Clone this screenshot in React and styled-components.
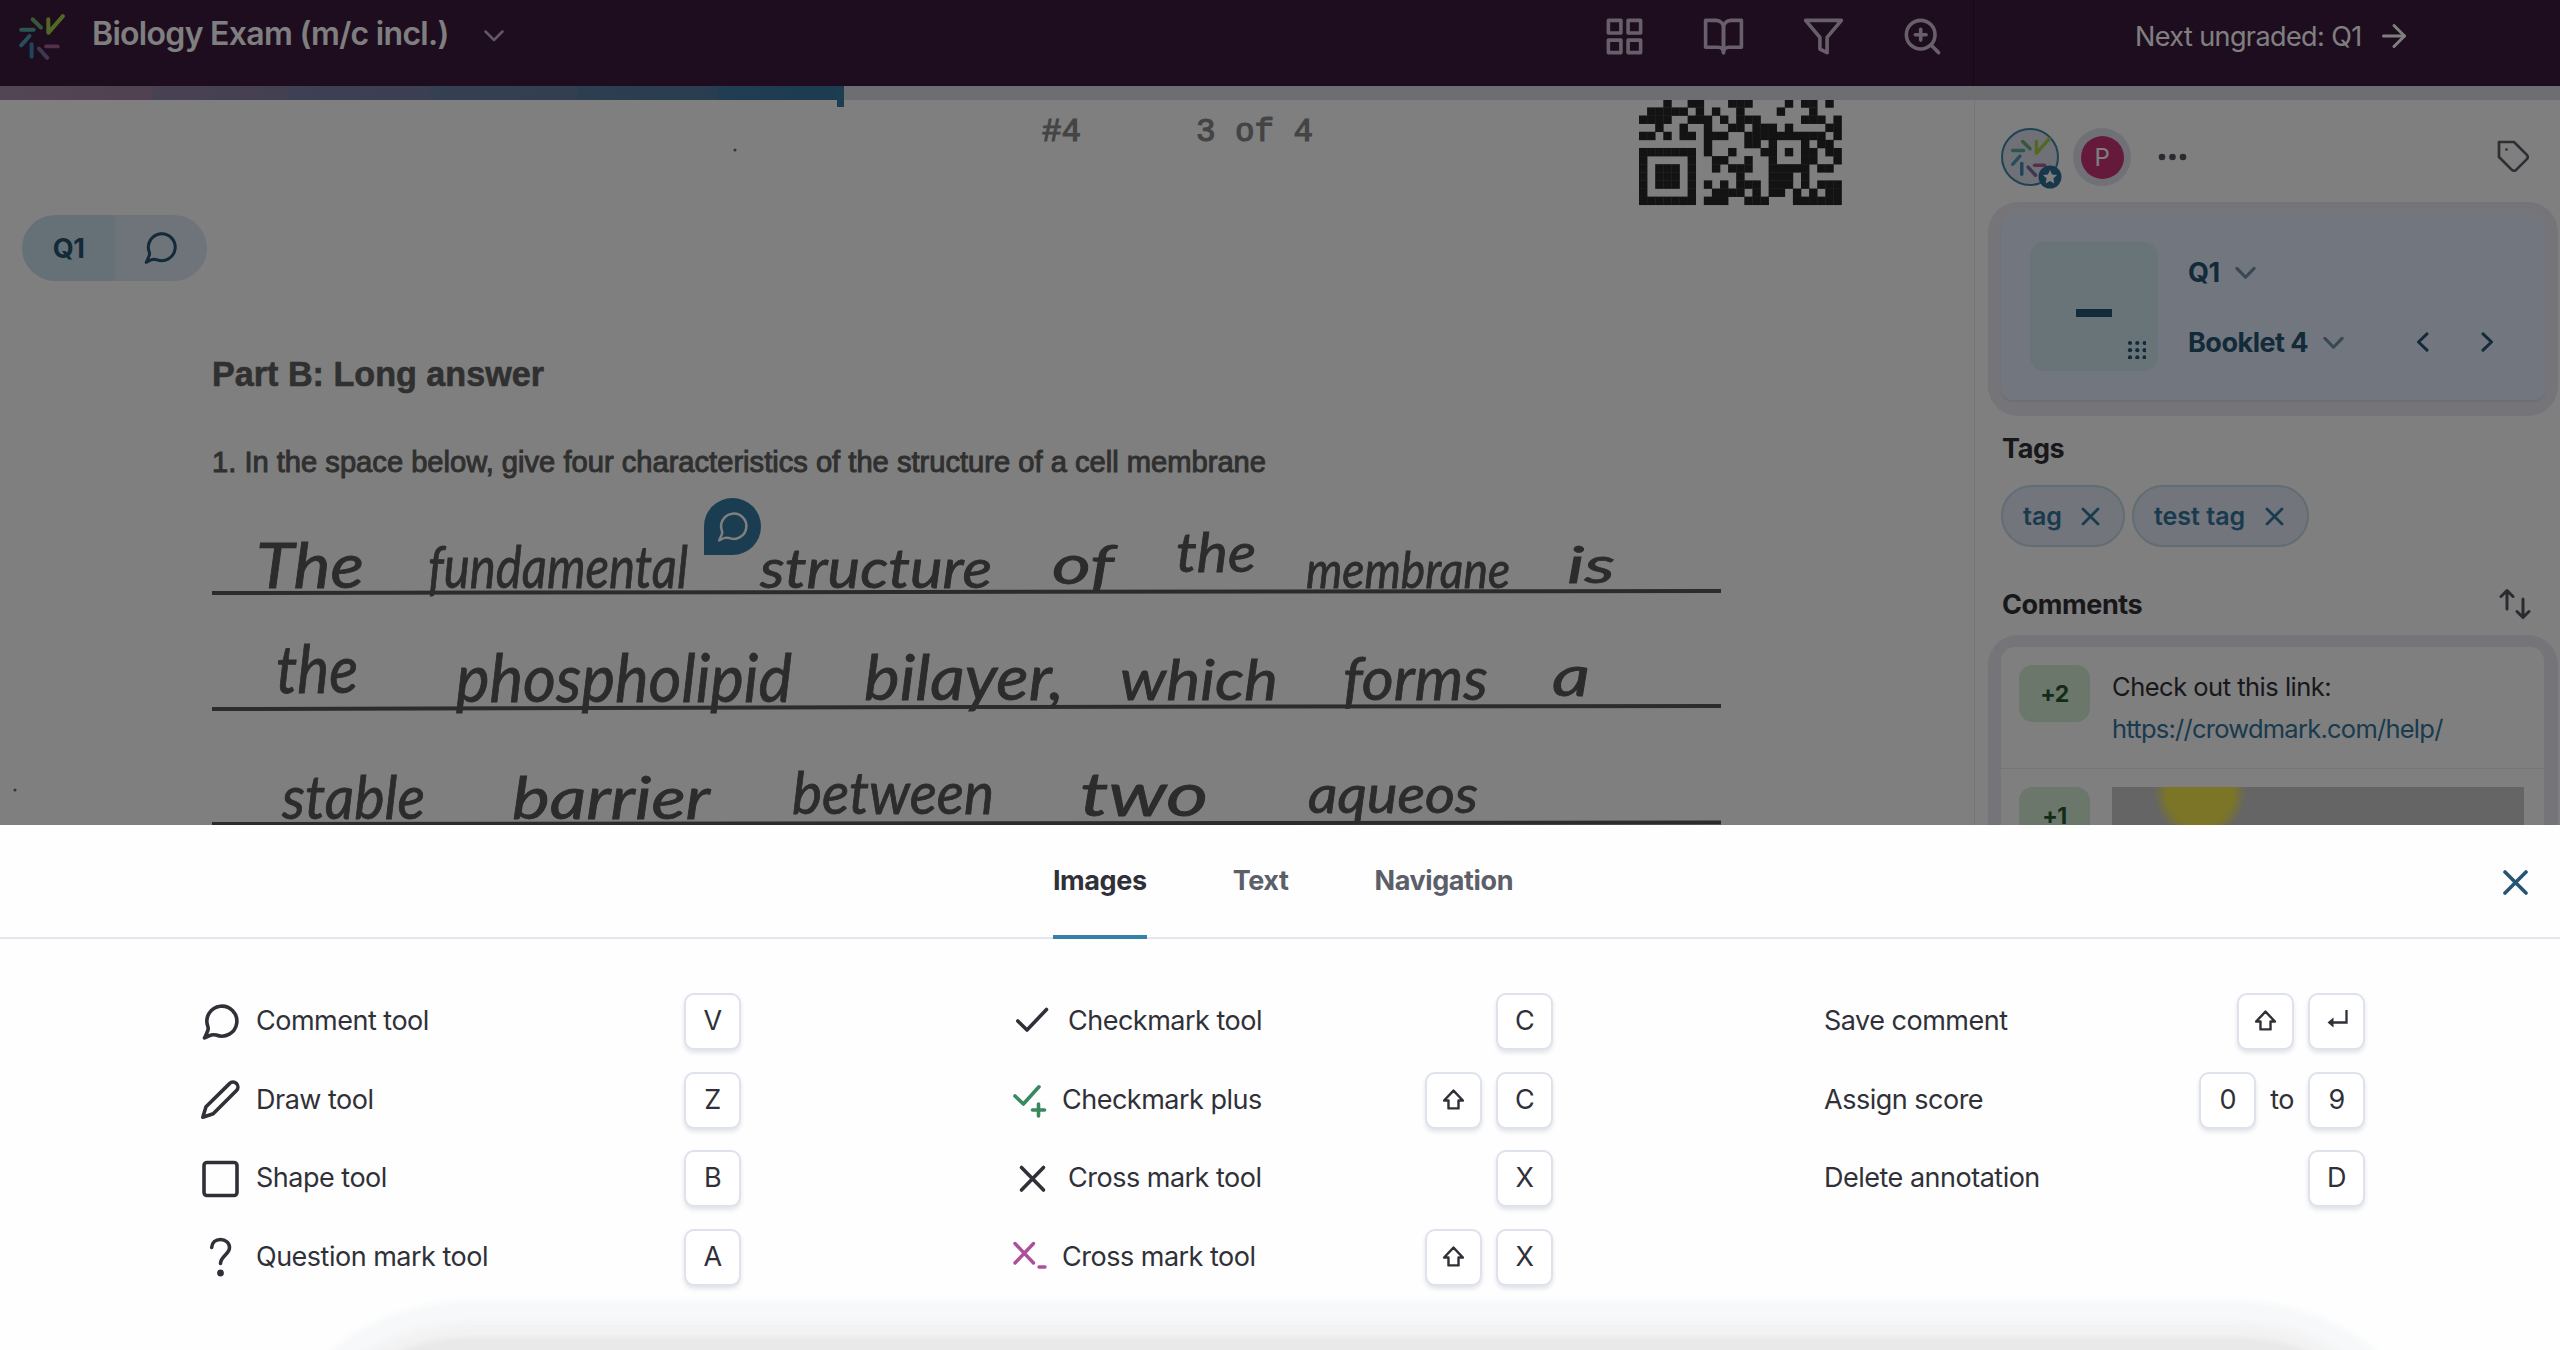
import styled, {createGlobalStyle} from "styled-components";
import {FiGrid, FiBookOpen, FiFilter, FiZoomIn, FiArrowRight, FiTag} from 'react-icons/fi'

const GlobalStyle = createGlobalStyle`
  * {
    box-sizing: border-box;
  }
  body {
    margin: 0;
    background-color: #fff;
    font-family: Inter, "Liberation Sans", sans-serif;
    font-size: 27px;
    letter-spacing: -0.5px;
    color: #303138;
  }
`

const Page = styled.div`
  width: 2560px;
  height: 1350px;
  display: flex;
  flex-direction: column;
  overflow: hidden;
`

const Workspace = styled.div`
  position: relative;
  height: 825px;
  flex: none;
  display: flex;
  flex-direction: column;
  overflow: hidden;
`

const Dimmer = styled.div`
  position: absolute;
  inset: 0;
  z-index: 2;
  background-color: rgba(0, 0, 0, 0.5);
`

const Header = styled.header`
  display: flex;
  height: 86px;
  flex: none;
  background-color: #3d183e;
  color: #fff;
`

const HeaderLeft = styled.div`
  width: 1974px;
  height: 86px;
  padding: 0 29px 0 17px;
  display: flex;
  align-items: flex-start;
  border-right: 1px solid #2a0f2c;
`

const HeaderLogo = styled.div`
  margin: 13px 27px 0 0;
  line-height: 0;
`

const ExamTitle = styled.h1`
  margin: 0;
  padding-top: 14px;
  font-size: 32px;
  line-height: 40px;
  font-weight: 600;
  letter-spacing: -0.7px;
`

const TitleChevron = styled.div`
  margin: 30px 0 0 35px;
  line-height: 0;
  color: #c0b3c4;
`

const HeaderIcons = styled.div`
  margin-left: auto;
  padding-top: 15px;
  display: flex;
  gap: 56.5px;
  font-size: 43px;
  line-height: 0;
  color: #cfc1d4;
`

const NextLink = styled.div`
  flex: 1;
  display: flex;
  align-items: center;
  height: 72px;
  padding-left: 161px;
  font-size: 27px;
  letter-spacing: -0.6px;

  svg {
    margin-left: 14px;
    font-size: 36px;
    stroke-width: 2;
  }
`

const Progress = styled.div`
  display: flex;
  height: 14px;
  flex: none;
  background-color: #dadce5;
`

const Segment = styled.div`
  width: ${props => props.$width}px;
  background: linear-gradient(90deg, ${props => props.$from}, ${props => props.$to});
`

const Marker = styled.div`
  width: 7px;
  height: 21px;
  background-color: #3a7ba3;
  z-index: 1;
`

const Main = styled.main`
  display: flex;
  flex: 1;
  min-height: 0;
`

const Paper = styled.section`
  position: relative;
  width: 1974px;
  flex: none;
`

const Scan = styled.svg`
  display: block;
  letter-spacing: 0;
`

const QuestionPill = styled.div`
  position: absolute;
  top: 115px;
  left: 22px;
  display: flex;
  height: 66px;
  border-radius: 33px;
  overflow: hidden;
  color: #265472;
  font-weight: 700;
`

const PillPart = styled.div`
  width: ${props => props.$width}px;
  display: flex;
  align-items: center;
  justify-content: center;
  background-color: ${props => props.$bg};
`

const Pin = styled.div`
  position: absolute;
  left: 704px;
  top: 398px;
  width: 57px;
  height: 57px;
  display: flex;
  align-items: center;
  justify-content: center;
  border-radius: 50% 50% 50% 0;
  background-color: #367aa2;
  color: #fff;
`

const Sidebar = styled.aside`
  flex: 1;
  padding: 28px 2px 0 13px;
  border-left: 1px solid #eaeaee;
`

const Graders = styled.div`
  display: flex;
  align-items: center;
  height: 58px;
  padding: 0 26px 0 13px;
`

const Avatar = styled.div`
  position: relative;
  width: 58px;
  height: 58px;
  margin-right: 14px;
  display: flex;
  align-items: center;
  justify-content: center;
  border-radius: 50%;
  border: ${props => props.$ring ? '2px solid #3f86ab' : 'none'};
  background-color: #e0e3ee;
`

const Initial = styled.div`
  width: 43px;
  height: 43px;
  border-radius: 50%;
  background-color: #cb3578;
  color: #fff;
  font-size: 24px;
  line-height: 43px;
  text-align: center;
`

const StarBadge = styled.svg`
  position: absolute;
  right: -5px;
  bottom: -5px;
`

const TagIcon = styled(FiTag)`
  margin-left: auto;
  font-size: 36px;
  stroke-width: 1.8;
  color: #5c5e68;
`

const ScoreFrame = styled.div`
  margin-top: 16px;
  height: 214px;
  padding: 13px 13px 16px;
  border-radius: 30px;
  background-color: #eaeaf2;
`

const ScoreCard = styled.div`
  height: 185px;
  padding: 27px 36px 0 29px;
  display: flex;
  border-radius: 12px;
  background-color: #e4ecfd;
  box-shadow: 0 2px 2px #dcdce0;
  color: #265472;
  font-weight: 700;
`

const ScoreBox = styled.div`
  width: 128px;
  height: 129px;
  padding: 67px 12px 12px 46px;
  border-radius: 14px;
  background-color: #d2e9f0;
  line-height: 0;
`

const Pickers = styled.div`
  flex: 1;
  margin-left: 30px;
`

const Picker = styled.div`
  display: flex;
  align-items: center;
  height: 60px;
  margin-bottom: 10px;
`

const PickerChevron = styled.span`
  margin-left: 15px;
  line-height: 0;
  opacity: 0.6;
`

const Stepper = styled.span`
  margin: 0 12px 0 auto;
  display: flex;
  gap: 44px;
`

const SectionTitle = styled.h2`
  display: flex;
  justify-content: space-between;
  align-items: center;
  height: 34px;
  margin: ${props => props.$top}px 27px 0 14px;
  font-size: 27px;
  font-weight: 700;
  letter-spacing: -0.4px;
  color: #303036;
`

const Chips = styled.div`
  display: flex;
  gap: 7px;
  margin: 20px 0 0 13px;
`

const Chip = styled.div`
  display: flex;
  align-items: center;
  justify-content: space-between;
  width: ${props => props.$width}px;
  height: 62px;
  padding: 0 23px 0 20px;
  border: 2px solid #c4d9e6;
  border-radius: 31px;
  background-color: #e4ebf8;
  color: #34749c;
  font-size: 25px;
  font-weight: 600;
  letter-spacing: 0;
`

const CommentFrame = styled.div`
  height: 300px;
  margin-top: 14px;
  padding: 12px 14px 0 13px;
  border-radius: 30px 30px 0 0;
  background-color: #eaeaf2;
`

const CommentList = styled.div`
  height: 100%;
  border-radius: 14px 14px 0 0;
  background-color: #fff;
`

const Comment = styled.div`
  display: flex;
  height: 122px;
  padding: 18px 18px 0;
  border-bottom: 1px solid #ebebef;
`

const Points = styled.div`
  width: 71px;
  height: 57px;
  margin-right: 22px;
  border-radius: 14px;
  background-color: #d6efd7;
  color: #24582f;
  font-size: 23px;
  line-height: 58px;
  font-weight: 700;
  text-align: center;
`

const CommentText = styled.div`
  padding-top: 1px;
  font-size: 25.5px;
  line-height: 42px;
`

const CommentLink = styled.span`
  color: #34749c;
  letter-spacing: -0.75px;
`

const Photo = styled.svg`
  display: block;
`

const Panel = styled.section`
  position: relative;
  flex: 1;
  overflow: hidden;
  background-color: #fefefe;
`

const TabBar = styled.div`
  position: relative;
  display: flex;
  justify-content: center;
  gap: 86px;
  height: 114px;
  padding-left: 6px;
  border-bottom: 2px solid #e4e6ed;
`

const Tab = styled.div`
  height: 114px;
  padding-top: 39px;
  line-height: 34px;
  font-weight: 700;
  letter-spacing: -0.4px;
  color: ${props => props.$active ? '#303138' : '#5c5f69'};
  border-bottom: ${props => props.$active ? '4px solid #367fa8' : 'none'};
`

const CloseButton = styled.div`
  position: absolute;
  right: 32px;
  top: 45px;
  line-height: 0;
  color: #265472;
`

const Columns = styled.div`
  display: flex;
  gap: 271px;
  padding: 54px 0 0 200px;
`

const Column = styled.div`
  width: 541px;
`

const Row = styled.div`
  display: flex;
  align-items: center;
  height: 57px;
  margin-bottom: 21.5px;
`

const RowIcon = styled.span`
  width: ${props => props.$small ? 34 : 40}px;
  margin-right: 16px;
  line-height: 0;
`

const Label = styled.span`
  padding-bottom: 2px;
`

const Keys = styled.div`
  margin-left: auto;
  display: flex;
  align-items: center;
  gap: 14px;
`

const Key = styled.kbd`
  width: 57px;
  height: 57px;
  padding-bottom: 2px;
  display: flex;
  align-items: center;
  justify-content: center;
  border: 2px solid #dee2ec;
  border-radius: 10px;
  background-color: #fff;
  box-shadow: 0 3px 4px rgba(60, 70, 100, 0.14);
  font-family: inherit;
`

const BottomGlow = styled.div`
  position: absolute;
  left: 370px;
  top: 595px;
  width: 1967px;
  height: 200px;
  border-radius: 100px;
  box-shadow: 0 0 5px 83px #e9e9e9, 0 0 8px 97px #f2f2f2, 0 0 6px 119px #f6f8fa;
`

const Burst = ({size}) => (
    <svg width={size} height={size} viewBox="0 0 46 46" fill="none" strokeWidth="3.8" strokeLinecap="round">
        <path d="M30 6v13L44 3" stroke="#a3d04e" strokeLinejoin="round" />
        <path d="M15 6l8 8" stroke="#6fae74" />
        <path d="M4 16h12" stroke="#56aa9f" />
        <path d="M4 31l8-9" stroke="#4c9cba" />
        <path d="M14 30v12" stroke="#3c88bd" />
        <path d="M21 34l8 9" stroke="#7c70a6" />
        <path d="M28 32h11" stroke="#a8609b" />
    </svg>
)

const Bubble = ({size, stroke = 3.4}) => (
    <svg width={size} height={size} viewBox="0 0 38 38" fill="none" stroke="currentColor" strokeWidth={stroke} strokeLinejoin="round">
        <path d="M14.2 32A15 15 0 1 0 5.8 23.3C6.6 26 6.6 26.5 2.5 35 9 31.5 10.5 31.3 14.2 32z" />
    </svg>
)

const Chevron = ({dir = 'down', width = 20, stroke = 3}) => {
    const turn = {down: 0, left: 90, right: 270}[dir]
    return (
        <svg width={width} height={width} viewBox="0 0 20 20" fill="none" stroke="currentColor" strokeWidth={stroke} strokeLinecap="round" strokeLinejoin="round">
            <path d="M1.8 6l8.2 8.5L18.2 6" transform={`rotate(${turn} 10 10)`} />
        </svg>
    )
}

const Cross = ({size, stroke}) => (
    <svg width={size} height={size} viewBox={`0 0 ${size} ${size}`} stroke="currentColor" strokeWidth={stroke} strokeLinecap="round">
        <path d={`M2 2L${size - 2} ${size - 2}M${size - 2} 2L2 ${size - 2}`} />
    </svg>
)

const ToolIcon = ({name}) => {
    const line = {fill: 'none', stroke: 'currentColor', strokeWidth: 3.6, strokeLinecap: 'round', strokeLinejoin: 'round'}
    switch (name) {
        case 'comment':
            return <svg width="40" height="40" viewBox="-2 -1 40 40" {...line}><path d="M14.2 32A15 15 0 1 0 5.8 23.3C6.6 26 6.6 26.5 2.5 35 9 31.5 10.5 31.3 14.2 32z" /></svg>
        case 'draw':
            return <svg width="40" height="40" viewBox="0 0 40 40" {...line}><path d="M29.5 3.6a4.9 4.9 0 0 1 7 6.9L13.2 33.8 2.8 37.2 6 26.8z" /></svg>
        case 'shape':
            return <svg width="40" height="40" viewBox="0 0 40 40" {...line}><rect x="4" y="3.5" width="33" height="33" rx="3" /></svg>
        case 'question':
            return (
                <svg width="40" height="40" viewBox="0 0 40 40" {...line}>
                    <path d="M11.7 10.5C12 5.5 15.5 2.5 20.5 2.5s9 3.3 9 8c0 7-9 8.5-9 16" />
                    <circle cx="20.5" cy="36" r="3.4" fill="currentColor" stroke="none" />
                </svg>
            )
        case 'check':
            return <svg width="40" height="40" viewBox="0 0 40 40" {...line}><path d="M5.8 19L15 28 34.5 7.500" /></svg>
        case 'cross':
            return <svg width="40" height="40" viewBox="0 0 40 40" {...line}><path d="M9.5 8.5L31.5 31M31.5 8.5L9.5 31" /></svg>
        case 'checkPlus':
            return (
                <svg width="35" height="40" viewBox="0 0 35 40" {...line} stroke="#3a885d">
                    <path d="M3 16L11.4 24 27 6.8M26.5 24v12M20.5 30h12" />
                </svg>
            )
        case 'crossMinus':
            return (
                <svg width="35" height="40" viewBox="0 0 35 40" {...line} strokeWidth="3.4" stroke="#ad4f99">
                    <path d="M3 6.5L21.500 26M21.500 6.500L3 26M27 30h6" />
                </svg>
            )
        default:
            return null
    }
}

const ShiftIcon = () => (
    <svg width="23" height="23" viewBox="0 0 22 22" fill="none" stroke="currentColor" strokeWidth="2.3" strokeLinejoin="round">
        <path d="M11 2.5L20 12h-4.200v7.500H6.200V12H2z" />
    </svg>
)

const EnterIcon = () => (
    <svg width="24" height="24" viewBox="0 0 24 24" fill="none" stroke="currentColor" strokeWidth="2.3">
        <path d="M21.5 1v12.5H4" />
        <path d="M8.500 8.5v10L2.500 13.500z" fill="currentColor" stroke="none" />
    </svg>
)

const qrRows = [
    '0001001100011100001011010',
    '0111110101001000010001000',
    '1111001110101110000011101',
    '0010010010011011101000011',
    '1101011011100111111111101',
    '0000000010000110100010110',
    '1111111010010001101011011',
    '1000001001100100100011001',
    '1011101001011100111110110',
    '1011101000001000111010000',
    '1011101010101110111010111',
    '1000001001111010110101011',
    '1111111011100111000111111',
]

// every word: text, left, baseline, width, font size
const answer = [
    ['The', 256, 588, 108, 62],
    ['fundamental', 428, 588, 260, 58],
    ['structure', 760, 588, 232, 54],
    ['of', 1052, 584, 62, 54],
    ['the', 1176, 572, 80, 54],
    ['membrane', 1306, 588, 204, 50],
    ['is', 1567, 583, 48, 50],
    ['the', 276, 693, 82, 66],
    ['phospholipid', 456, 702, 336, 66],
    ['bilayer,', 864, 700, 200, 62],
    ['which', 1120, 700, 158, 56],
    ['forms', 1343, 700, 145, 60],
    ['a', 1552, 696, 38, 56],
    ['stable', 282, 819, 143, 60],
    ['barrier', 512, 819, 198, 58],
    ['between', 792, 814, 202, 58],
    ['two', 1080, 816, 128, 60],
    ['aqueos', 1308, 813, 170, 52],
]

const segments = [
    [152, '#a58ba8', '#a283a2'],
    [136, '#9084a8', '#8a7ea4'],
    [142, '#7c80a6', '#787ca2'],
    [147, '#6b80a4', '#667ca0'],
    [141, '#5a7ca2', '#557aa0'],
    [119, '#427aa2', '#3a789f'],
]

const shortcuts = [
    [
        {icon: 'comment', label: 'Comment tool', keys: ['V']},
        {icon: 'draw', label: 'Draw tool', keys: ['Z']},
        {icon: 'shape', label: 'Shape tool', keys: ['B']},
        {icon: 'question', label: 'Question mark tool', keys: ['A']},
    ],
    [
        {icon: 'check', label: 'Checkmark tool', keys: ['C']},
        {icon: 'checkPlus', small: true, label: 'Checkmark plus', keys: ['shift', 'C']},
        {icon: 'cross', label: 'Cross mark tool', keys: ['X']},
        {icon: 'crossMinus', small: true, label: 'Cross mark tool', keys: ['shift', 'X']},
    ],
    [
        {label: 'Save comment', keys: ['shift', 'enter']},
        {label: 'Assign score', keys: ['0', 'to', '9']},
        {label: 'Delete annotation', keys: ['D']},
    ],
]

const renderKey = (name) => {
    if (name === 'to') return <Label key={name}>to</Label>
    if (name === 'shift') return <Key key={name}><ShiftIcon /></Key>
    if (name === 'enter') return <Key key={name}><EnterIcon /></Key>
    return <Key key={name}>{name}</Key>
}

const ScannedPage = () => (
    <Scan width="1973" height="725" viewBox="0 100 1973 725">
        <g fontFamily="Liberation Mono, monospace" fontSize="32.5" fill="#888888" stroke="#888888" strokeWidth="1.2">
            <text x="1042" y="141">#4</text>
            <text x="1196" y="141">3 of 4</text>
        </g>
        <g fill="#262626" transform="translate(1639 99.3) scale(8.1 8.11)">
            {qrRows.map((row, y) => row.split('').map((bit, x) => (
                bit === '1' && <rect key={`${x}-${y}`} x={x} y={y} width="1.04" height="1.04" />
            )))}
        </g>
        <g fontFamily="Liberation Sans, Arial, sans-serif" fill="#606060" stroke="#606060">
            <text x="212" y="386" fontSize="34.5" fontWeight="700" strokeWidth="0.6" textLength="332" lengthAdjust="spacingAndGlyphs">Part B: Long answer</text>
            <text x="212" y="472" fontSize="30" strokeWidth="1" textLength="1054" lengthAdjust="spacingAndGlyphs">1. In the space below, give four characteristics of the structure of a cell membrane</text>
        </g>
        <g stroke="#585858" strokeWidth="4">
            <path d="M212 593L900 592 1721 591" fill="none" />
            <path d="M212 709L960 707 1721 706" fill="none" />
            <path d="M212 824L1721 822.5" fill="none" />
        </g>
        <g fontFamily="Lato, sans-serif" fontStyle="italic" fill="#585858" stroke="#585858" strokeWidth="0.8">
            {answer.map(([word, x, y, width, size]) => (
                <text key={`${word}-${x}`} x={x} y={y} fontSize={size} textLength={width} lengthAdjust="spacingAndGlyphs">{word}</text>
            ))}
        </g>
        <g fill="#6c6c6c">
            <circle cx="735" cy="150" r="1.5" />
            <circle cx="15" cy="790" r="1.5" />
        </g>
    </Scan>
)

const App = () => {
    return (
        <Page>
            <GlobalStyle />
            <Workspace>
                <Header>
                    <HeaderLeft>
                        <HeaderLogo><Burst size={48} /></HeaderLogo>
                        <ExamTitle>Biology Exam (m/c incl.)</ExamTitle>
                        <TitleChevron>
                            <svg width="20" height="12" viewBox="0 0 20 12" fill="none" stroke="currentColor" strokeWidth="2.5" strokeLinecap="round" strokeLinejoin="round">
                                <path d="M1.5 1.5l8.5 8.5 8.5-8.5" />
                            </svg>
                        </TitleChevron>
                        <HeaderIcons>
                            <FiGrid />
                            <FiBookOpen />
                            <FiFilter />
                            <FiZoomIn />
                        </HeaderIcons>
                    </HeaderLeft>
                    <NextLink>Next ungraded: Q1 <FiArrowRight /></NextLink>
                </Header>
                <Progress>
                    {segments.map(([width, from, to]) => (
                        <Segment key={from} $width={width} $from={from} $to={to} />
                    ))}
                    <Marker />
                </Progress>
                <Main>
                    <Paper>
                        <ScannedPage />
                        <QuestionPill>
                            <PillPart $width={93} $bg="#cbe3ec">Q1</PillPart>
                            <PillPart $width={92} $bg="#dfe7f5"><Bubble size={34} /></PillPart>
                        </QuestionPill>
                        <Pin><Bubble size={32} stroke={3} /></Pin>
                    </Paper>
                    <Sidebar>
                        <Graders>
                            <Avatar $ring>
                                <Burst size={42} />
                                <StarBadge width="24" height="24" viewBox="0 0 24 24">
                                    <circle cx="12" cy="12" r="11.5" fill="#2f6f95" />
                                    <path d="M12 5l2.1 4.5 4.9.6-3.6 3.4.9 4.9L12 16l-4.3 2.4.9-4.9L5 10.1l4.9-.6z" fill="#fff" />
                                </StarBadge>
                            </Avatar>
                            <Avatar><Initial>P</Initial></Avatar>
                            <svg width="30" height="8" viewBox="0 0 30 8" fill="#55575f" transform="translate(13 0)">
                                <circle cx="4" cy="4" r="3.3" />
                                <circle cx="14.5" cy="4" r="3.3" />
                                <circle cx="25" cy="4" r="3.3" />
                            </svg>
                            <TagIcon />
                        </Graders>
                        <ScoreFrame>
                            <ScoreCard>
                                <ScoreBox>
                                    <svg width="70" height="50" viewBox="0 0 70 50" fill="#265472">
                                        <rect width="36" height="8" />
                                        {[0, 1, 2].map((r) => [0, 1, 2].map((c) => (
                                            <circle key={`${r}${c}`} cx={54 + c * 7.3} cy={34 + r * 7.2} r="2.1" />
                                        )))}
                                    </svg>
                                </ScoreBox>
                                <Pickers>
                                    <Picker>Q1 <PickerChevron><Chevron width={21} /></PickerChevron></Picker>
                                    <Picker>
                                        Booklet 4 <PickerChevron><Chevron width={21} /></PickerChevron>
                                        <Stepper>
                                            <Chevron dir="left" />
                                            <Chevron dir="right" />
                                        </Stepper>
                                    </Picker>
                                </Pickers>
                            </ScoreCard>
                        </ScoreFrame>
                        <SectionTitle $top={15}>Tags</SectionTitle>
                        <Chips>
                            <Chip $width={124}>tag <Cross size={19} stroke={2.8} /></Chip>
                            <Chip $width={177}>test tag <Cross size={19} stroke={2.8} /></Chip>
                        </Chips>
                        <SectionTitle $top={40}>
                            Comments
                            <svg width="32" height="32" viewBox="0 0 32 32" fill="none" stroke="#55575f" strokeWidth="3" strokeLinecap="round" strokeLinejoin="round">
                                <path d="M8 21V2.5M2 8.5l6-6 6 6M24 11v18.5M18 23.5l6 6 6-6" />
                            </svg>
                        </SectionTitle>
                        <CommentFrame>
                            <CommentList>
                                <Comment>
                                    <Points>+2</Points>
                                    <CommentText>
                                        Check out this link:<br />
                                        <CommentLink>https://crowdmark.com/help/</CommentLink>
                                    </CommentText>
                                </Comment>
                                <Comment>
                                    <Points>+1</Points>
                                    <Photo width="412" height="120" viewBox="0 0 412 120">
                                        <defs>
                                            <radialGradient id="sun">
                                                <stop offset="0.72" stopColor="#f8ea4e" />
                                                <stop offset="1" stopColor="#f8ea4e" stopOpacity="0" />
                                            </radialGradient>
                                        </defs>
                                        <rect width="412" height="120" fill="#cacaca" />
                                        <circle cx="88" cy="6" r="46" fill="url(#sun)" />
                                    </Photo>
                                </Comment>
                            </CommentList>
                        </CommentFrame>
                    </Sidebar>
                </Main>
                <Dimmer />
            </Workspace>
            <Panel>
                <BottomGlow />
                <TabBar>
                    <Tab $active>Images</Tab>
                    <Tab>Text</Tab>
                    <Tab>Navigation</Tab>
                    <CloseButton><Cross size={25} stroke={3.6} /></CloseButton>
                </TabBar>
                <Columns>
                    {shortcuts.map((rows, i) => (
                        <Column key={i}>
                            {rows.map((item) => (
                                <Row key={item.keys.join()}>
                                    {item.icon && <RowIcon $small={item.small}><ToolIcon name={item.icon} /></RowIcon>}
                                    <Label>{item.label}</Label>
                                    <Keys>{item.keys.map(renderKey)}</Keys>
                                </Row>
                            ))}
                        </Column>
                    ))}
                </Columns>
            </Panel>
        </Page>
    )
}

export default App
